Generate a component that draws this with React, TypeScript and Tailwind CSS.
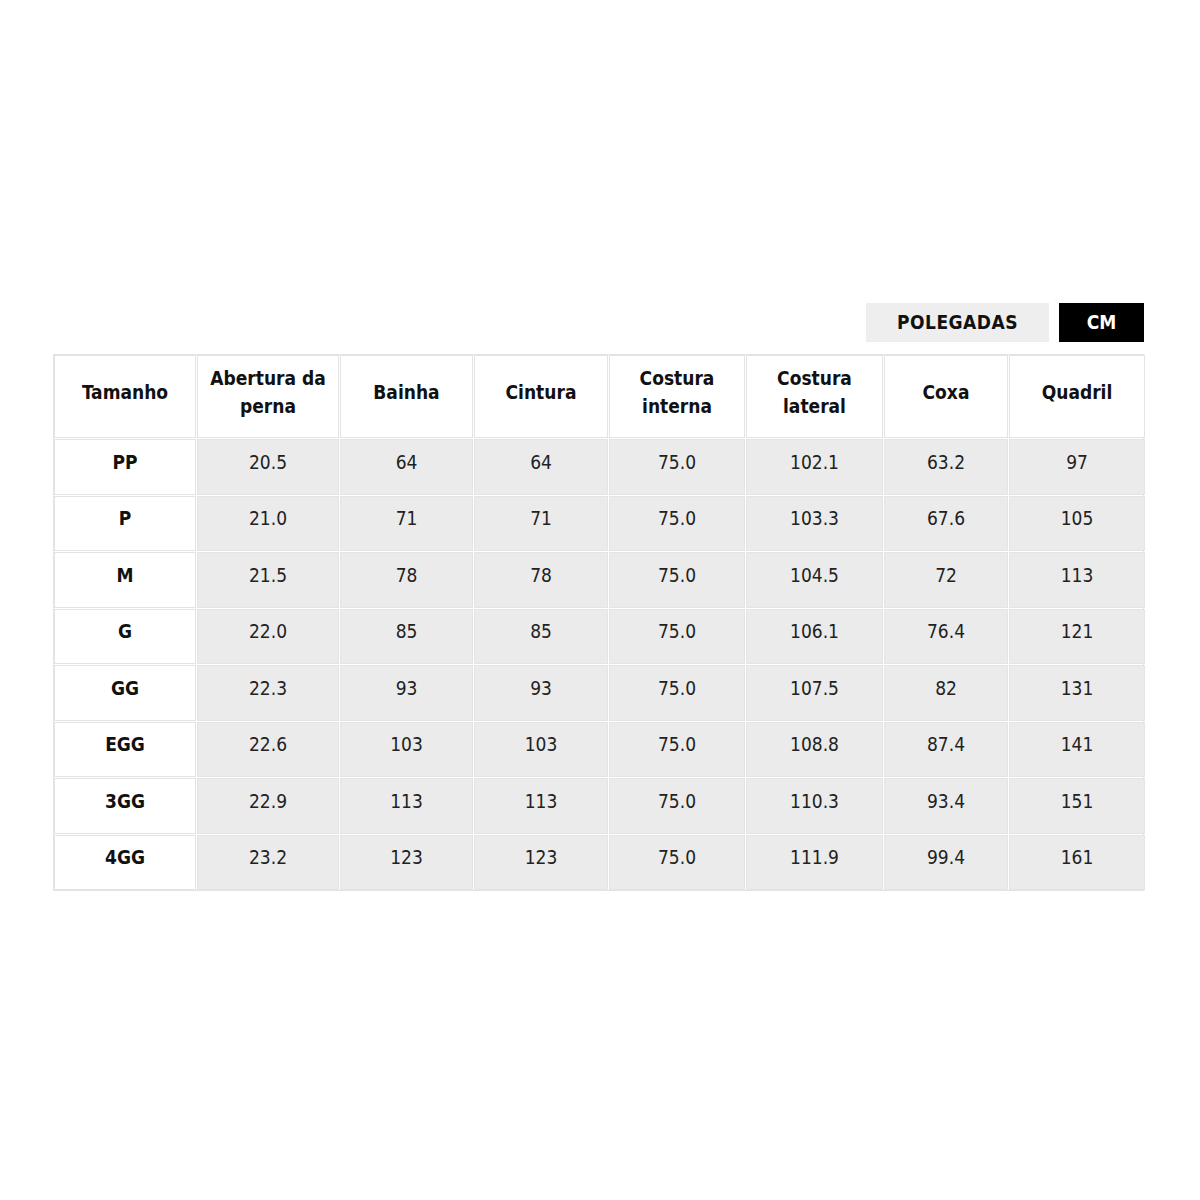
import React from "react";

const headers = ["Tamanho", "Abertura da perna", "Bainha", "Cintura", "Costura interna", "Costura lateral", "Coxa", "Quadril"];
const headerLines: string[][] = [["Tamanho"], ["Abertura da", "perna"], ["Bainha"], ["Cintura"], ["Costura", "interna"], ["Costura", "lateral"], ["Coxa"], ["Quadril"]];

const rows: string[][] = [
  ["PP", "20.5", "64", "64", "75.0", "102.1", "63.2", "97"],
  ["P", "21.0", "71", "71", "75.0", "103.3", "67.6", "105"],
  ["M", "21.5", "78", "78", "75.0", "104.5", "72", "113"],
  ["G", "22.0", "85", "85", "75.0", "106.1", "76.4", "121"],
  ["GG", "22.3", "93", "93", "75.0", "107.5", "82", "131"],
  ["EGG", "22.6", "103", "103", "75.0", "108.8", "87.4", "141"],
  ["3GG", "22.9", "113", "113", "75.0", "110.3", "93.4", "151"],
  ["4GG", "23.2", "123", "123", "75.0", "111.9", "99.4", "161"],
];

export default function App() {
  return (
    <div
      className="w-[1200px] h-[1200px] bg-white pt-[303px] pl-[53px]"
      style={{ fontFamily: '"DejaVu Sans Condensed", "DejaVu Sans", sans-serif' }}
    >
      <div className="w-[1091px]">
        <div className="flex justify-end gap-[10px]">
          <div className="w-[183px] h-[39px] bg-[#eeeeee] flex items-center justify-center text-[19px] font-bold text-[#111] tracking-[0.5px]">
            POLEGADAS
          </div>
          <div className="w-[85px] h-[39px] bg-black flex items-center justify-center text-[19px] font-bold text-white">
            CM
          </div>
        </div>
        <div className="mt-[12px] border border-[#e3e3e3] bg-white">
          <div className="grid grid-cols-[142px_142px_133px_134px_136px_137px_124px_136px] gap-px">
            {headerLines.map((lines, i) => (
              <div
                key={headers[i]}
                className="h-[83px] border border-[#e3e3e3] bg-white flex flex-col items-center justify-center text-[19px] leading-[28px] font-bold text-[#111]"
              >
                <div className="-mt-[9px] flex flex-col items-center">
                  {lines.map((l) => (
                    <span key={l}>{l}</span>
                  ))}
                </div>
              </div>
            ))}
            {rows.map((r) =>
              r.map((v, j) => (
                <div
                  key={r[0] + j}
                  className={
                    j === 0
                      ? "h-[55.5px] border border-[#e3e3e3] bg-white flex items-center justify-center text-[19px] font-bold text-[#111]"
                      : "h-[55.5px] border border-[#e4e4e4] bg-[#ebebeb] flex items-center justify-center text-[19px] text-[#222]"
                  }
                >
                  <span className="-mt-[10px]">{v}</span>
                </div>
              ))
            )}
          </div>
        </div>
      </div>
    </div>
  );
}
